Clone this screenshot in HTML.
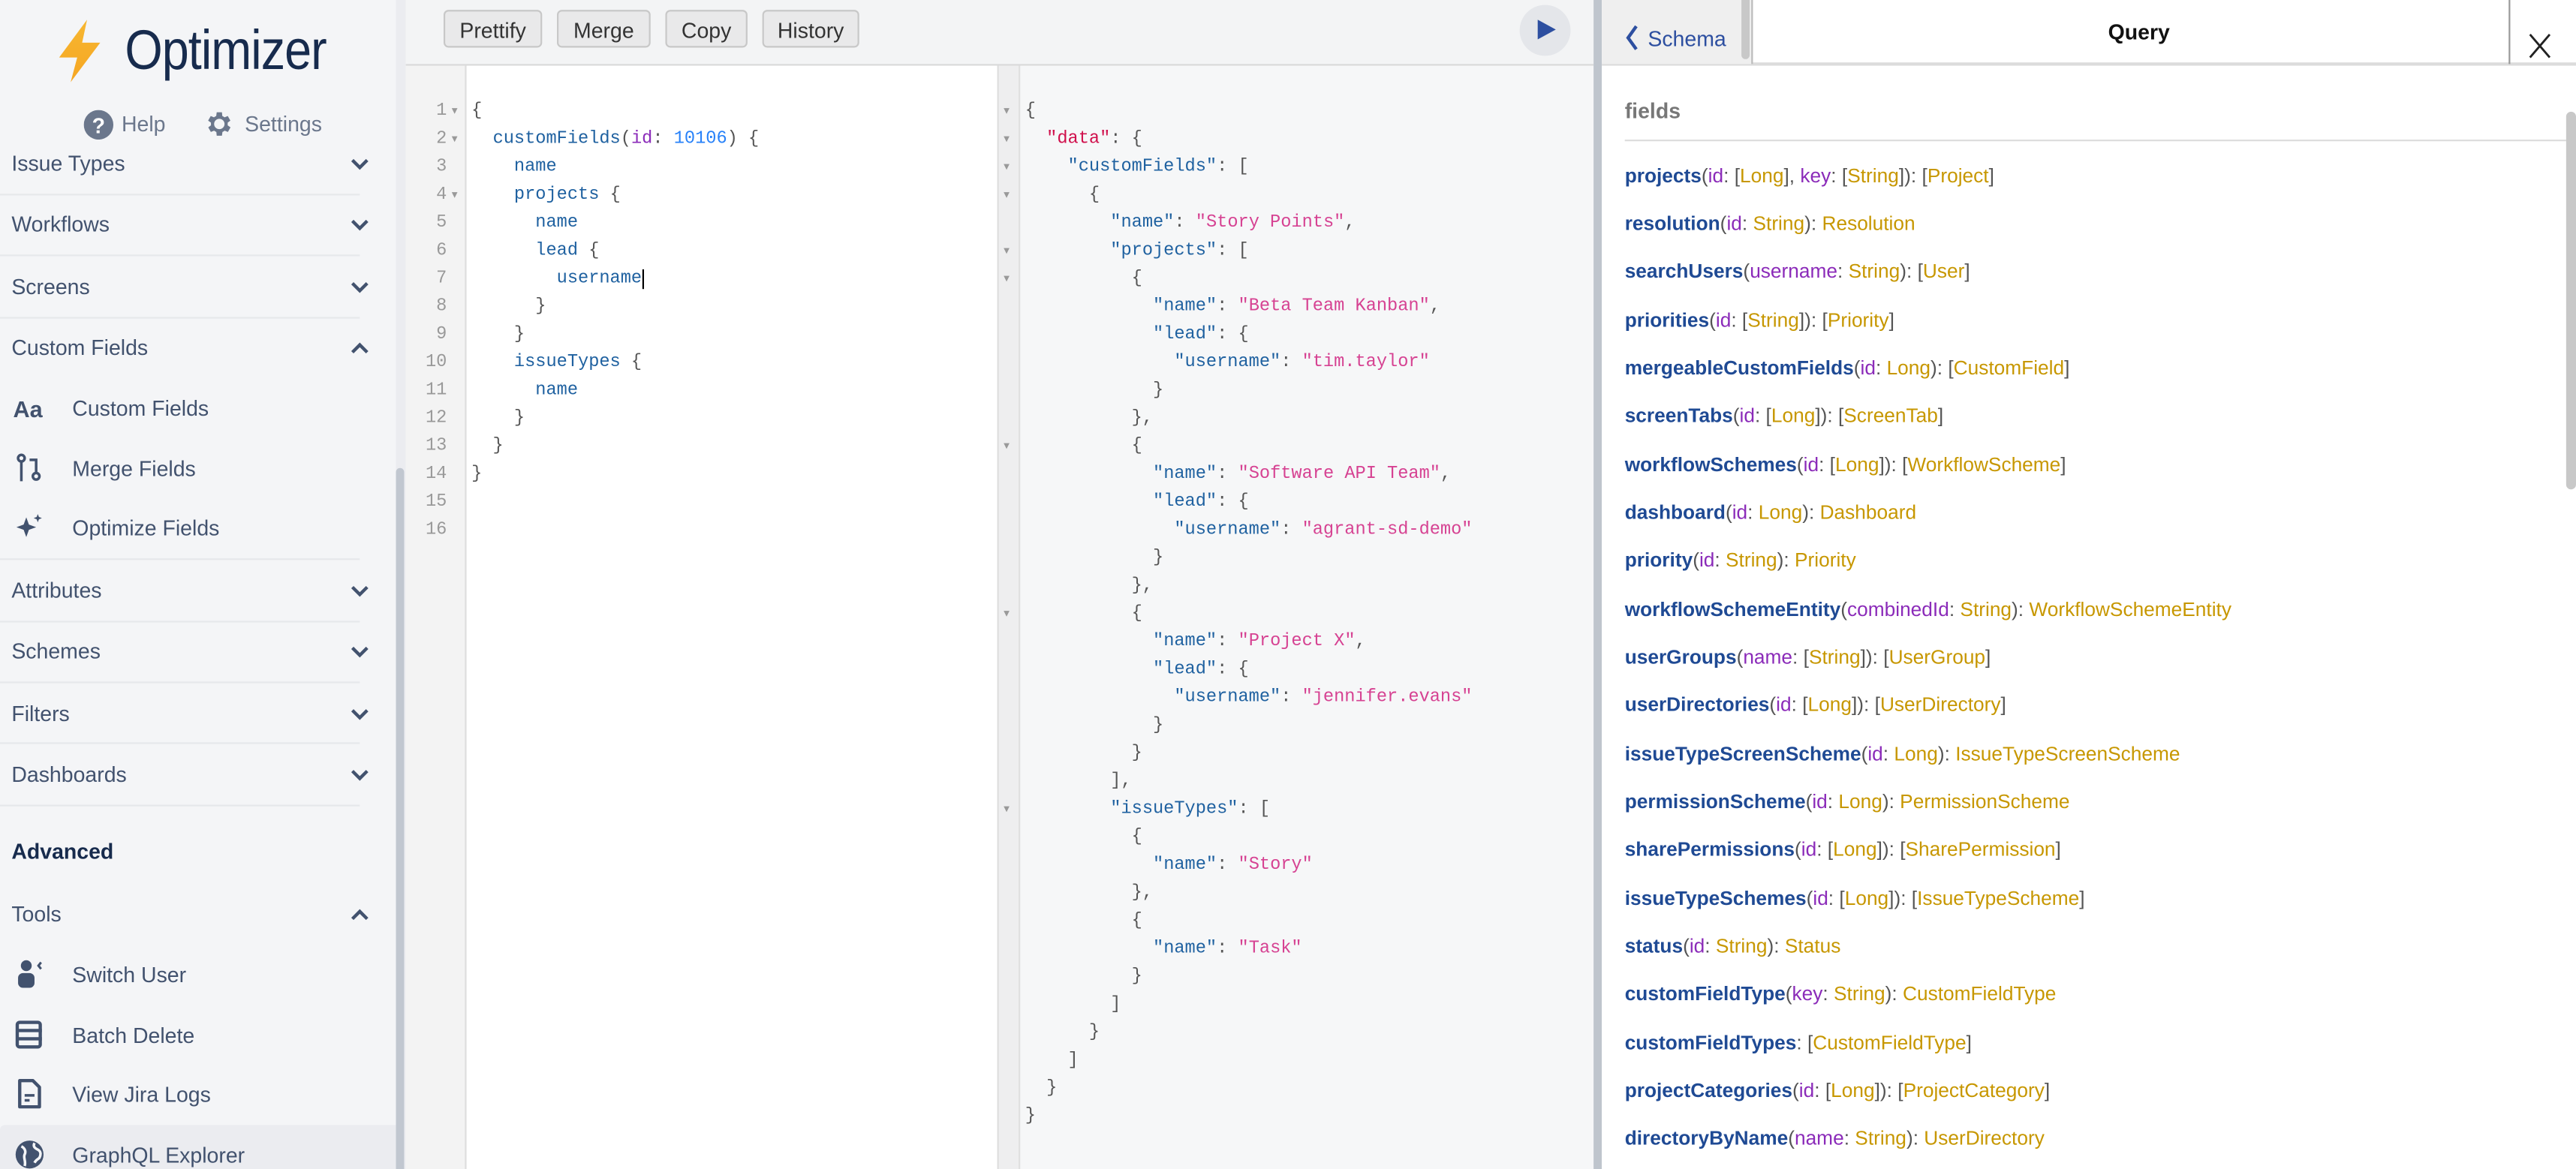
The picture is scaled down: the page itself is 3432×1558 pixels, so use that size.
<!DOCTYPE html>
<html><head><meta charset="utf-8">
<style>
html,body{margin:0;padding:0;width:3432px;height:1558px;overflow:hidden;background:#fff}
#w{position:absolute;left:0;top:0;width:1568px;height:712px;transform:scale(2.18878);transform-origin:0 0;font-family:"Liberation Sans",sans-serif;overflow:hidden}
.a{position:absolute}
#side{left:0;top:0;width:241px;height:712px;background:#f4f5f7}
.mi{position:absolute;left:7px;font-size:13px;color:#42526e;line-height:16px}
.sep{position:absolute;left:0;width:219px;height:1px;background:#e6e8eb}
.chev{position:absolute;left:213px;width:12px;height:8px}
.sub{position:absolute;left:44px;font-size:13px;color:#42526e;line-height:16px}
.ic{position:absolute;left:9px;width:18px;height:18px}
.btn{position:absolute;top:6px;height:23px;border:1px solid #c8c8c8;border-radius:3px;background:#e9e9ea;font-size:13px;color:#333;line-height:23px;text-align:center;box-sizing:border-box}
pre{margin:0;font-family:"Liberation Mono","DejaVu Sans Mono",monospace;font-size:10.8px;line-height:17px;color:#555}
.fold{font-size:9px;color:#999}
.k{color:#1f61a0}.pp{color:#8b2bb9}.nm{color:#2882f9}.s{color:#d64292}.r{color:#d0104c}
#fl div{position:absolute;left:989px;font-size:12px;color:#555;white-space:nowrap;line-height:14px}
#fl b{color:#1f4a94}
#fl i{font-style:normal;color:#8b2bb9}
#fl u{text-decoration:none;color:#c79700}
</style></head><body>
<div id="w">
<div id="side" class="a">
  <svg class="a" style="left:34px;top:11px" width="30" height="40" viewBox="0 0 30 40"><defs><linearGradient id="g" x1="0" y1="0" x2="0" y2="1"><stop offset="0" stop-color="#f7b731"/><stop offset="1" stop-color="#f5a623"/></linearGradient></defs><path d="M19 1 L2 24 L13 24 L9 39 L27 15 L16 15 Z" fill="url(#g)"/></svg>
  <div class="a" style="left:76px;top:11px;font-size:34px;color:#172b4d;line-height:40px;letter-spacing:-0.5px;transform:scaleX(0.87);transform-origin:0 0">Optimizer</div>
  <svg class="a" style="left:51px;top:67px" width="18" height="18" viewBox="0 0 18 18"><circle cx="9" cy="9" r="9" fill="#6b778c"/><text x="9" y="14" font-size="13" font-weight="bold" fill="#fff" text-anchor="middle" font-family="Liberation Sans">?</text></svg>
  <div class="a" style="left:74px;top:68px;font-size:13px;color:#6b778c">Help</div>
  <svg class="a" style="left:124px;top:66px" width="19" height="19" viewBox="0 0 24 24"><path fill="#6b778c" d="M19.4 13a7.5 7.5 0 000-2l2.1-1.6-2-3.5-2.5 1a7.6 7.6 0 00-1.7-1L15 3h-4l-.4 2.9a7.6 7.6 0 00-1.7 1l-2.5-1-2 3.5L6.6 11a7.5 7.5 0 000 2l-2.1 1.6 2 3.5 2.5-1a7.6 7.6 0 001.7 1L11 21h4l.4-2.9a7.6 7.6 0 001.7-1l2.5 1 2-3.5zM13 16a4 4 0 110-8 4 4 0 010 8z" transform="translate(-1 0)"/></svg>
  <div class="a" style="left:149px;top:68px;font-size:13px;color:#6b778c">Settings</div>

  <div class="mi" style="top:92px">Issue Types</div><svg class="chev" style="top:96px" viewBox="0 0 12 8"><path d="M1.5 1.5L6 6l4.5-4.5" stroke="#42526e" stroke-width="2" fill="none"/></svg>
  <div class="sep" style="top:118px"></div>
  <div class="mi" style="top:129px">Workflows</div><svg class="chev" style="top:133px" viewBox="0 0 12 8"><path d="M1.5 1.5L6 6l4.5-4.5" stroke="#42526e" stroke-width="2" fill="none"/></svg>
  <div class="sep" style="top:155px"></div>
  <div class="mi" style="top:167px">Screens</div><svg class="chev" style="top:171px" viewBox="0 0 12 8"><path d="M1.5 1.5L6 6l4.5-4.5" stroke="#42526e" stroke-width="2" fill="none"/></svg>
  <div class="sep" style="top:193px"></div>
  <div class="mi" style="top:204px">Custom Fields</div><svg class="chev" style="top:208px" viewBox="0 0 12 8"><path d="M1.5 6.5L6 2l4.5 4.5" stroke="#42526e" stroke-width="2" fill="none"/></svg>

  <div class="a" style="left:8px;top:241px;font-size:14px;font-weight:bold;color:#42526e">Aa</div>
  <div class="sub" style="top:241px">Custom Fields</div>
  <svg class="ic" style="top:276px" viewBox="0 0 18 18"><circle cx="4" cy="3" r="2" fill="none" stroke="#42526e" stroke-width="1.6"/><path d="M4 5v12M9 4h4l0 8" stroke="#42526e" stroke-width="1.6" fill="none"/><circle cx="13" cy="14" r="2" fill="none" stroke="#42526e" stroke-width="1.6"/></svg>
  <div class="sub" style="top:278px">Merge Fields</div>
  <svg class="ic" style="top:312px" viewBox="0 0 18 18"><path d="M7 3l1.6 4.4L13 9l-4.4 1.6L7 15l-1.6-4.4L1 9l4.4-1.6z M14 1l.7 1.8 1.8.7-1.8.7L14 6l-.7-1.8-1.8-.7 1.8-.7z" fill="#42526e"/></svg>
  <div class="sub" style="top:314px">Optimize Fields</div>
  <div class="sep" style="top:340px"></div>
  <div class="mi" style="top:352px">Attributes</div><svg class="chev" style="top:356px" viewBox="0 0 12 8"><path d="M1.5 1.5L6 6l4.5-4.5" stroke="#42526e" stroke-width="2" fill="none"/></svg>
  <div class="sep" style="top:378px"></div>
  <div class="mi" style="top:389px">Schemes</div><svg class="chev" style="top:393px" viewBox="0 0 12 8"><path d="M1.5 1.5L6 6l4.5-4.5" stroke="#42526e" stroke-width="2" fill="none"/></svg>
  <div class="sep" style="top:415px"></div>
  <div class="mi" style="top:427px">Filters</div><svg class="chev" style="top:431px" viewBox="0 0 12 8"><path d="M1.5 1.5L6 6l4.5-4.5" stroke="#42526e" stroke-width="2" fill="none"/></svg>
  <div class="sep" style="top:452px"></div>
  <div class="mi" style="top:464px">Dashboards</div><svg class="chev" style="top:468px" viewBox="0 0 12 8"><path d="M1.5 1.5L6 6l4.5-4.5" stroke="#42526e" stroke-width="2" fill="none"/></svg>
  <div class="sep" style="top:490px"></div>
  <div class="mi" style="top:511px;font-weight:bold;color:#172b4d">Advanced</div>
  <div class="mi" style="top:549px">Tools</div><svg class="chev" style="top:553px" viewBox="0 0 12 8"><path d="M1.5 6.5L6 2l4.5 4.5" stroke="#42526e" stroke-width="2" fill="none"/></svg>

  <svg class="ic" style="top:584px" viewBox="0 0 18 18"><circle cx="7" cy="4" r="3.3" fill="#42526e"/><rect x="2" y="8.5" width="10" height="9" rx="3" fill="#42526e"/><path d="M16 2l-1.6 2 1.6 2" stroke="#42526e" stroke-width="1.4" fill="none"/></svg>
  <div class="sub" style="top:586px">Switch User</div>
  <svg class="ic" style="top:621px" viewBox="0 0 18 18"><rect x="1.5" y="1.5" width="14" height="15" rx="1.5" fill="none" stroke="#42526e" stroke-width="2"/><path d="M1.5 6.5h15M1.5 11.5h15" stroke="#42526e" stroke-width="2"/></svg>
  <div class="sub" style="top:623px">Batch Delete</div>
  <svg class="ic" style="top:657px" viewBox="0 0 18 18"><path d="M3 1h8l4 4v12H3z" fill="none" stroke="#42526e" stroke-width="2" stroke-linejoin="round"/><path d="M6 10h6M6 13h3" stroke="#42526e" stroke-width="1.6"/></svg>
  <div class="sub" style="top:659px">View Jira Logs</div>
  <div class="a" style="left:0;top:685px;width:241px;height:27px;background:#ebecf0;border-radius:3px 0 0 0"></div>
  <svg class="ic" style="top:694px" viewBox="0 0 18 18"><circle cx="9" cy="9" r="8.5" fill="#42526e"/><path d="M4 4c2 1 3 3 2 5s1 4 0 7M12 2c-1 2 0 3 2 4s2 3 1 5c-1 1-2 1-3 3" stroke="#f4f5f7" stroke-width="1.6" fill="none"/></svg>
  <div class="sub" style="top:696px">GraphQL Explorer</div>
</div>
<div class="a" style="left:241px;top:0;width:6px;height:712px;background:#ebecf0"></div>
<div class="a" style="left:241px;top:285px;width:5px;height:427px;background:#c1c7d0;border-radius:3px 3px 0 0"></div>

<!-- toolbar -->
<div class="a" style="left:247px;top:0;width:723px;height:40px;background:#f3f4f5;border-bottom:1px solid #d9d9d9;box-sizing:border-box"></div>
<div class="btn" style="left:270px;width:60px">Prettify</div>
<div class="btn" style="left:339px;width:57px">Merge</div>
<div class="btn" style="left:405px;width:50px">Copy</div>
<div class="btn" style="left:464px;width:59px">History</div>
<div class="a" style="left:925px;top:3px;width:31px;height:31px;border-radius:50%;background:#e4e6ea"></div>
<svg class="a" style="left:935px;top:11px" width="13" height="14" viewBox="0 0 13 14"><path d="M1 1L12 7 1 13z" fill="#2d4fa0"/></svg>

<!-- query editor -->
<div class="a" style="left:247px;top:40px;width:36px;height:672px;background:#f3f3f3;border-right:1px solid #ddd"></div>
<div class="a" style="left:284px;top:40px;width:323px;height:672px;background:#fff"></div>
<pre class="a" style="left:248px;top:60px;width:24px;text-align:right;color:#999">1
2
3
4
5
6
7
8
9
10
11
12
13
14
15
16</pre>
<pre class="a fold" style="left:274px;top:60px">▾
▾
 
▾</pre>
<pre class="a" style="left:287px;top:60px">{
  <span class="k">customFields</span>(<span class="pp">id</span>: <span class="nm">10106</span>) {
    <span class="k">name</span>
    <span class="k">projects</span> {
      <span class="k">name</span>
      <span class="k">lead</span> {
        <span class="k">username</span><span style="border-left:1px solid #000;margin-left:0"></span>
      }
    }
    <span class="k">issueTypes</span> {
      <span class="k">name</span>
    }
  }
}</pre>

<!-- result -->
<div class="a" style="left:607px;top:40px;width:363px;height:672px;background:#f6f7f8;border-left:1px solid #ddd"></div>
<div class="a" style="left:608px;top:40px;width:12px;height:672px;background:#eeeeef;border-right:1px solid #e0e0e0"></div>
<pre class="a fold" style="left:610px;top:60px">▾
▾
▾
▾
 
▾
▾
 
 
 
 
 
▾
 
 
 
 
 
▾
 
 
 
 
 
 
▾</pre>
<pre class="a" style="left:624px;top:60px">{
  <span class="r">"data"</span>: {
    <span class="k">"customFields"</span>: [
      {
        <span class="k">"name"</span>: <span class="s">"Story Points"</span>,
        <span class="k">"projects"</span>: [
          {
            <span class="k">"name"</span>: <span class="s">"Beta Team Kanban"</span>,
            <span class="k">"lead"</span>: {
              <span class="k">"username"</span>: <span class="s">"tim.taylor"</span>
            }
          },
          {
            <span class="k">"name"</span>: <span class="s">"Software API Team"</span>,
            <span class="k">"lead"</span>: {
              <span class="k">"username"</span>: <span class="s">"agrant-sd-demo"</span>
            }
          },
          {
            <span class="k">"name"</span>: <span class="s">"Project X"</span>,
            <span class="k">"lead"</span>: {
              <span class="k">"username"</span>: <span class="s">"jennifer.evans"</span>
            }
          }
        ],
        <span class="k">"issueTypes"</span>: [
          {
            <span class="k">"name"</span>: <span class="s">"Story"</span>
          },
          {
            <span class="k">"name"</span>: <span class="s">"Task"</span>
          }
        ]
      }
    ]
  }
}</pre>

<!-- divider -->
<div class="a" style="left:970px;top:0;width:5px;height:712px;background:#bfc5cd"></div>
<div class="a" style="left:975px;top:0;width:593px;height:712px;background:#fff"></div>
<div class="a" style="left:975px;top:0;width:593px;height:40px;border-bottom:2px solid #dcdcdc;box-sizing:border-box;background:#fff"></div>
<div class="a" style="left:975px;top:0;width:92px;height:39px;background:#efefef;border-right:1px solid #bbb;box-sizing:border-box"></div>
<div class="a" style="left:1060px;top:0;width:5px;height:36px;background:#c8c8c8;border-radius:0 0 3px 3px"></div>
<svg class="a" style="left:989px;top:15px" width="9" height="16" viewBox="0 0 9 16"><path d="M7 1L2 8l5 7" stroke="#2d4fa0" stroke-width="2" fill="none"/></svg>
<div class="a" style="left:1003px;top:16px;font-size:13px;color:#2d4fa0">Schema</div>
<div class="a" style="left:1270px;top:12px;width:64px;text-align:center;font-size:13px;font-weight:bold;color:#111">Query</div>
<div class="a" style="left:1527px;top:0;width:1px;height:39px;background:#999"></div>
<svg class="a" style="left:1539px;top:20px" width="14" height="16" viewBox="0 0 14 16"><path d="M1 1l12 14M13 1L1 15" stroke="#222" stroke-width="1.3"/></svg>

<div class="a" style="left:989px;top:60px;font-size:13px;font-weight:bold;color:#777">fields</div>
<div class="a" style="left:989px;top:85px;width:573px;height:1px;background:#dcdcdc"></div>
<div class="a" style="left:1562px;top:68px;width:6px;height:230px;background:#c8c8c8;border-radius:3px"></div>

<div id="fl">
<div style="top:100px"><b>projects</b>(<i>id</i>: [<u>Long</u>], <i>key</i>: [<u>String</u>]): [<u>Project</u>]</div>
<div style="top:129px"><b>resolution</b>(<i>id</i>: <u>String</u>): <u>Resolution</u></div>
<div style="top:158px"><b>searchUsers</b>(<i>username</i>: <u>String</u>): [<u>User</u>]</div>
<div style="top:188px"><b>priorities</b>(<i>id</i>: [<u>String</u>]): [<u>Priority</u>]</div>
<div style="top:217px"><b>mergeableCustomFields</b>(<i>id</i>: <u>Long</u>): [<u>CustomField</u>]</div>
<div style="top:246px"><b>screenTabs</b>(<i>id</i>: [<u>Long</u>]): [<u>ScreenTab</u>]</div>
<div style="top:276px"><b>workflowSchemes</b>(<i>id</i>: [<u>Long</u>]): [<u>WorkflowScheme</u>]</div>
<div style="top:305px"><b>dashboard</b>(<i>id</i>: <u>Long</u>): <u>Dashboard</u></div>
<div style="top:334px"><b>priority</b>(<i>id</i>: <u>String</u>): <u>Priority</u></div>
<div style="top:364px"><b>workflowSchemeEntity</b>(<i>combinedId</i>: <u>String</u>): <u>WorkflowSchemeEntity</u></div>
<div style="top:393px"><b>userGroups</b>(<i>name</i>: [<u>String</u>]): [<u>UserGroup</u>]</div>
<div style="top:422px"><b>userDirectories</b>(<i>id</i>: [<u>Long</u>]): [<u>UserDirectory</u>]</div>
<div style="top:452px"><b>issueTypeScreenScheme</b>(<i>id</i>: <u>Long</u>): <u>IssueTypeScreenScheme</u></div>
<div style="top:481px"><b>permissionScheme</b>(<i>id</i>: <u>Long</u>): <u>PermissionScheme</u></div>
<div style="top:510px"><b>sharePermissions</b>(<i>id</i>: [<u>Long</u>]): [<u>SharePermission</u>]</div>
<div style="top:540px"><b>issueTypeSchemes</b>(<i>id</i>: [<u>Long</u>]): [<u>IssueTypeScheme</u>]</div>
<div style="top:569px"><b>status</b>(<i>id</i>: <u>String</u>): <u>Status</u></div>
<div style="top:598px"><b>customFieldType</b>(<i>key</i>: <u>String</u>): <u>CustomFieldType</u></div>
<div style="top:628px"><b>customFieldTypes</b>: [<u>CustomFieldType</u>]</div>
<div style="top:657px"><b>projectCategories</b>(<i>id</i>: [<u>Long</u>]): [<u>ProjectCategory</u>]</div>
<div style="top:686px"><b>directoryByName</b>(<i>name</i>: <u>String</u>): <u>UserDirectory</u></div>
</div>
</div>
</body></html>
